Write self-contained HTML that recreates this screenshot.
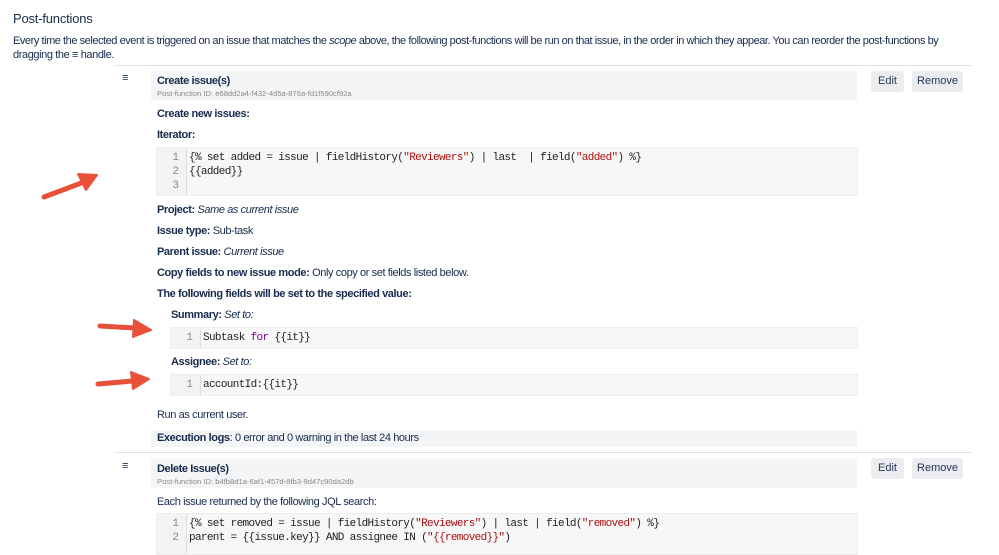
<!DOCTYPE html>
<html><head><meta charset="utf-8"><style>
body{margin:0;width:999px;height:545px;overflow:hidden;background:#fff;font-family:"Liberation Sans",sans-serif;color:#172b4d;font-size:11px;position:relative;letter-spacing:-0.4px}
.a{position:absolute;white-space:nowrap;line-height:14px}
.b{font-weight:bold}
.box{position:absolute;background:#f4f5f7}
.code{position:absolute;background:#f7f7f7;border:1px solid #eee;font-family:"Liberation Mono",monospace;font-size:11px;color:#222;letter-spacing:-0.65px}
.code .g{position:absolute;left:0;top:0;bottom:0;width:29px;background:#f3f3f3;border-right:1px solid #ddd}
.code .ln{position:absolute;color:#888;width:22px;text-align:right;line-height:14px;letter-spacing:0}
.code .t{position:absolute;white-space:pre;line-height:14px}
.s{color:#a11}.k{color:#708}
.btn{position:absolute;background:#ebecf0;border-radius:3px;font-size:11px;text-align:center;line-height:21px;height:21px;color:#253858;letter-spacing:0}
.hr{position:absolute;height:1px;background:#dfe1e6}
.id{font-size:7.6px;color:#888;letter-spacing:0}
</style></head><body>
<div class="a" style="left:13px;top:12px;font-size:13px;letter-spacing:-0.2px">Post-functions</div>
<div class="a" style="left:13px;top:34px;letter-spacing:-0.45px">Every time the selected event is triggered on an issue that matches the <i>scope</i> above, the following post-functions will be run on that issue, in the order in which they appear. You can reorder the post-functions by</div>
<div class="a" style="left:13px;top:48px">dragging the ≡ handle.</div>
<div class="hr" style="left:115px;top:65px;width:857px"></div>

<div class="a" style="left:122px;top:71px">≡</div>
<div class="box" style="left:151px;top:71px;width:706px;height:29px"></div>
<div class="a b" style="left:157px;top:74px">Create issue(s)</div>
<div class="a id" style="left:157px;top:87px">Post-function ID: e68dd2a4-f432-4d5a-876a-fd1f590cf92a</div>
<div class="btn" style="left:871px;top:71px;width:33px">Edit</div>
<div class="btn" style="left:912px;top:71px;width:51px">Remove</div>

<div class="a b" style="left:157px;top:107px">Create new issues:</div>
<div class="a b" style="left:157px;top:128px">Iterator:</div>
<div class="code" style="left:156px;top:147px;width:700px;height:47px"><div class="g"></div>
<div class="ln" style="left:0;top:3px">1</div><div class="ln" style="left:0;top:17px">2</div><div class="ln" style="left:0;top:31px">3</div>
<div class="t" style="left:32px;top:3px">{% set added = issue | fieldHistory(<span class="s">"Reviewers"</span>) | last  | field(<span class="s">"added"</span>) %}</div>
<div class="t" style="left:32px;top:17px">{{added}}</div></div>

<div class="a" style="left:157px;top:203px"><b>Project:</b> <i>Same as current issue</i></div>
<div class="a" style="left:157px;top:224px"><b>Issue type:</b> Sub-task</div>
<div class="a" style="left:157px;top:245px"><b>Parent issue:</b> <i>Current issue</i></div>
<div class="a" style="left:157px;top:266px"><b>Copy fields to new issue mode:</b> Only copy or set fields listed below.</div>
<div class="a b" style="left:157px;top:287px">The following fields will be set to the specified value:</div>

<div class="a" style="left:171px;top:308px"><b>Summary:</b> <i>Set to:</i></div>
<div class="code" style="left:170px;top:327px;width:686px;height:20px"><div class="g"></div><div class="ln" style="top:3px">1</div><div class="t" style="left:32px;top:3px">Subtask <span class="k">for</span> {{it}}</div></div>
<div class="a" style="left:171px;top:355px"><b>Assignee:</b> <i>Set to:</i></div>
<div class="code" style="left:170px;top:374px;width:686px;height:20px"><div class="g"></div><div class="ln" style="top:3px">1</div><div class="t" style="left:32px;top:3px">accountId:{{it}}</div></div>

<div class="a" style="left:157px;top:408px">Run as current user.</div>
<div class="box" style="left:151px;top:430px;width:706px;height:17px"></div>
<div class="a" style="left:157px;top:431px"><b>Execution logs</b>: 0 error and 0 warning in the last 24 hours</div>
<div class="hr" style="left:115px;top:452px;width:857px"></div>

<div class="a" style="left:122px;top:459px">≡</div>
<div class="box" style="left:151px;top:459px;width:706px;height:29px"></div>
<div class="a b" style="left:157px;top:462px">Delete Issue(s)</div>
<div class="a id" style="left:157px;top:475px">Post-function ID: b4fb8d1a-6af1-457d-8fb3-9d47c90da2db</div>
<div class="btn" style="left:871px;top:458px;width:33px">Edit</div>
<div class="btn" style="left:912px;top:458px;width:51px">Remove</div>
<div class="a" style="left:157px;top:495px">Each issue returned by the following JQL search:</div>
<div class="code" style="left:156px;top:513px;width:700px;height:40px"><div class="g"></div>
<div class="ln" style="top:3px">1</div><div class="ln" style="top:17px">2</div>
<div class="t" style="left:32px;top:3px">{% set removed = issue | fieldHistory(<span class="s">"Reviewers"</span>) | last | field(<span class="s">"removed"</span>) %}</div>
<div class="t" style="left:32px;top:17px">parent = {{issue.key}} AND assignee IN (<span class="s">"{{removed}}"</span>)</div></div>

<svg style="position:absolute;left:0;top:0" width="999" height="545">
<g fill="#e8503a" stroke="#e8503a" stroke-linejoin="round">
<path d="M44 197 L84 182" stroke-width="5" stroke-linecap="round"/>
<path d="M97 175 L78 174 L86 190 Z" stroke-width="2"/>
<path d="M100 326 L135 328" stroke-width="5" stroke-linecap="round"/>
<path d="M151 330 L134 320 L133 337 Z" stroke-width="2"/>
<path d="M98 384 L133 381" stroke-width="5" stroke-linecap="round"/>
<path d="M149 379 L131 372 L133 389 Z" stroke-width="2"/>
</g></svg>
</body></html>
